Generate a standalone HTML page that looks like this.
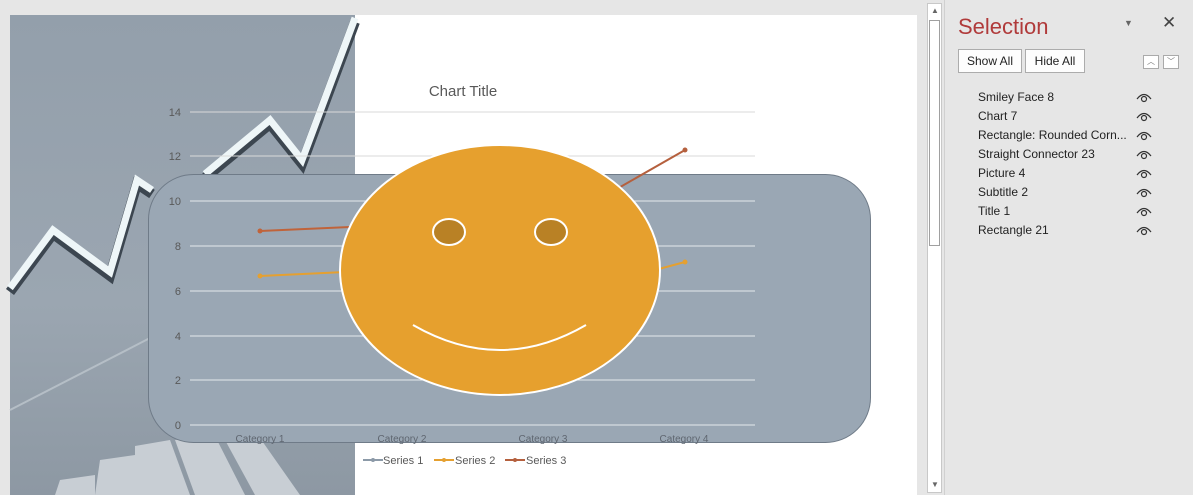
<!DOCTYPE html>
<html><head><meta charset="utf-8"><style>
body{margin:0;width:1193px;height:495px;overflow:hidden;background:#e6e6e6;font-family:"Liberation Sans",sans-serif;position:relative}
.panel{position:absolute;left:944px;top:0;width:249px;height:495px;background:#e6e6e6;border-left:1px solid #d0d0d0}
.t{position:absolute;left:13px;top:14px;font-size:22px;color:#b03a3a}
.btn{position:absolute;top:49px;height:22px;border:1px solid #acacac;background:#fdfdfd;font-size:12px;line-height:22px;text-align:center;color:#222}
.it{position:absolute;left:33px;font-size:12px;color:#222}
</style></head><body>
<div style="position:absolute;left:0;top:0;width:944px;height:495px;background:#e6e6e6"></div>
<div style="position:absolute;left:10px;top:15px;width:907px;height:480px;background:#fff"></div>
<div style="position:absolute;left:927px;top:3px;width:15px;height:490px;background:#fff;border:1px solid #c8c8c8;box-sizing:border-box"></div>
<div style="position:absolute;left:929px;top:20px;width:11px;height:226px;background:#fff;border:1px solid #a0a0a0;box-sizing:border-box"></div>
<div style="position:absolute;left:931px;top:6px;font-size:8px;color:#666">▲</div>
<div style="position:absolute;left:931px;top:480px;font-size:8px;color:#666">▼</div>
<svg style="position:absolute;left:0;top:0" width="944" height="495">
<defs><linearGradient id="g" x1="0" y1="0" x2="0" y2="1"><stop offset="0" stop-color="#939fab"/><stop offset="0.6" stop-color="#9ba6b1"/><stop offset="1" stop-color="#8d98a3"/></linearGradient></defs>
<rect x="10" y="15" width="345" height="480" fill="url(#g)"/>
<g fill="#c8ced4"><polygon points="135,446 170,440 190,495 135,495"/><polygon points="175,440 215,436 245,495 195,495"/><polygon points="225,440 260,438 300,495 255,495"/><polygon points="100,460 135,455 140,495 95,495"/><polygon points="60,480 95,475 95,495 55,495"/></g>
<line x1="10" y1="410" x2="150" y2="338" stroke="#b5bec6" stroke-width="2"/>
<polyline points="10,292 53,234 110,276 137,184 152,194" fill="none" stroke="#3c4650" stroke-width="10"/>
<polyline points="10,288 53,230 110,272 137,180 152,190" fill="none" stroke="#eef6f8" stroke-width="7"/>
<polyline points="205,178 270,124 302,164 355,22" fill="none" stroke="#3c4650" stroke-width="10"/>
<polyline points="205,174 270,120 302,160 355,18" fill="none" stroke="#eef6f8" stroke-width="7"/>
<g stroke="#d9d9d9" stroke-width="1"><line x1="190" y1="112" x2="755" y2="112"/><line x1="190" y1="156" x2="755" y2="156"/></g>
<rect x="148.5" y="174.5" width="722" height="268" rx="45" fill="#9aa7b4" stroke="#6f7b88"/>
<g stroke="#e4e8ec" stroke-width="1"><line x1="190" y1="201" x2="755" y2="201"/><line x1="190" y1="246" x2="755" y2="246"/><line x1="190" y1="291" x2="755" y2="291"/><line x1="190" y1="336" x2="755" y2="336"/><line x1="190" y1="380" x2="755" y2="380"/><line x1="190" y1="425" x2="755" y2="425"/></g>
<g font-size="11" fill="#595959" text-anchor="end"><text x="181" y="116">14</text><text x="181" y="160">12</text><text x="181" y="205">10</text><text x="181" y="250">8</text><text x="181" y="295">6</text><text x="181" y="340">4</text><text x="181" y="384">2</text><text x="181" y="429">0</text></g>
<g font-size="10" fill="#5f6670" text-anchor="middle"><text x="260" y="442">Category 1</text><text x="402" y="442">Category 2</text><text x="543" y="442">Category 3</text><text x="684" y="442">Category 4</text></g>
<text x="463" y="96" font-size="15" fill="#595959" text-anchor="middle">Chart Title</text>
<line x1="260" y1="231" x2="350" y2="227" stroke="#c0633a" stroke-width="2"/><circle cx="260" cy="231" r="2.5" fill="#c0633a"/>
<line x1="260" y1="276" x2="345" y2="272" stroke="#e5a030" stroke-width="2"/><circle cx="260" cy="276" r="2.5" fill="#e5a030"/>
<line x1="615" y1="190" x2="685" y2="150" stroke="#b5603e" stroke-width="2"/><circle cx="685" cy="150" r="2.5" fill="#b5603e"/>
<line x1="655" y1="270" x2="685" y2="262" stroke="#e5a030" stroke-width="2"/><circle cx="685" cy="262" r="2.5" fill="#e5a030"/>
<ellipse cx="500" cy="270" rx="160" ry="125" fill="#e6a02e" stroke="#fff" stroke-width="2"/>
<ellipse cx="449" cy="232" rx="16" ry="13" fill="#b98125" stroke="#fff" stroke-width="2"/>
<ellipse cx="551" cy="232" rx="16" ry="13" fill="#b98125" stroke="#fff" stroke-width="2"/>
<path d="M413 325 Q500 375 586 325" fill="none" stroke="#fff" stroke-width="2"/>
<g font-size="11" fill="#595959"><line x1="363" y1="460" x2="383" y2="460" stroke="#8c9aa8" stroke-width="2"/><circle cx="373" cy="460" r="2" fill="#8c9aa8"/><text x="383" y="464">Series 1</text>
<line x1="434" y1="460" x2="454" y2="460" stroke="#e5a030" stroke-width="2"/><circle cx="444" cy="460" r="2" fill="#e5a030"/><text x="455" y="464">Series 2</text>
<line x1="505" y1="460" x2="525" y2="460" stroke="#b5603e" stroke-width="2"/><circle cx="515" cy="460" r="2" fill="#b5603e"/><text x="526" y="464">Series 3</text></g>
</svg>
<div class="panel">
<div class="t">Selection</div>
<div style="position:absolute;left:179px;top:18px;font-size:9px;color:#666">▼</div>
<div style="position:absolute;left:217px;top:13px;font-size:17px;color:#444">✕</div>
<div class="btn" style="left:13px;width:62px">Show All</div>
<div class="btn" style="left:80px;width:58px">Hide All</div>
<div style="position:absolute;left:198px;top:55px;width:14px;height:12px;border:1px solid #aaa;background:#fff;font-size:8px;text-align:center;line-height:12px;color:#777">︿</div>
<div style="position:absolute;left:218px;top:55px;width:14px;height:12px;border:1px solid #aaa;background:#fff;font-size:8px;text-align:center;line-height:12px;color:#777">﹀</div>
<div class="it" style="top:90px">Smiley Face 8</div>
<div class="it" style="top:109px">Chart 7</div>
<div class="it" style="top:128px">Rectangle: Rounded Corn...</div>
<div class="it" style="top:147px">Straight Connector 23</div>
<div class="it" style="top:166px">Picture 4</div>
<div class="it" style="top:185px">Subtitle 2</div>
<div class="it" style="top:204px">Title 1</div>
<div class="it" style="top:223px">Rectangle 21</div>
<svg style="position:absolute;left:190px;top:90px" width="20" height="150" fill="none" stroke="#333" stroke-width="1.2">
<g id="e"><path d="M2 9 Q9 0 16 9"/><circle cx="9" cy="9" r="2.5"/></g>
<use href="#e" y="19"/><use href="#e" y="38"/><use href="#e" y="57"/><use href="#e" y="76"/><use href="#e" y="95"/><use href="#e" y="114"/><use href="#e" y="133"/>
</svg>
</div>
</body></html>
